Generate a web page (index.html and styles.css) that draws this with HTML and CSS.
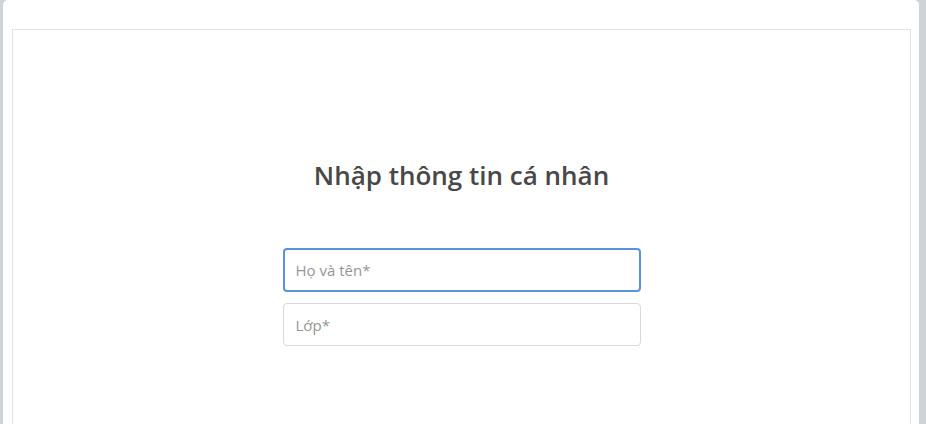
FILE: index.html
```html
<!DOCTYPE html>
<html lang="vi">
<head>
  <meta charset="UTF-8" />
  <meta name="viewport" content="width=device-width, initial-scale=1.0"/>
  <title>Nhập thông tin cá nhân</title>
<link rel="stylesheet" href="styles.css">
</head>
<body>

<div class="card">
  <div class="panel">
    <h1 class="title">Nhập thông tin cá nhân</h1>
    <form class="info-form">
      <input type="text" class="field focused" placeholder="Họ và tên*" />
      <input type="text" class="field" placeholder="Lớp*" />
    </form>
  </div>
</div>

</body>
</html>
```

FILE: styles.css
```css
:root {
  --gray-bg: #ced3d7;
  --border: #e2e2e2;
  --input-border: #d9d9d9;
  --focus: #5b92e0;
  --text: #484848;
  --placeholder: #959595;
}

* {
  box-sizing: border-box;
}

body {
  margin: 0;
  height: 424px;
  overflow: hidden;
  background: var(--gray-bg);
  font-family: 'Open Sans', sans-serif;
}

.card {
  margin-left: 3px;
  width: 916px;
  height: 424px;
  background: #fff;
  border-radius: 5px 5px 0 0;
  padding: 29px 8px 0 9px;
}

.panel {
  border: 1px solid var(--border);
  border-bottom: none;
  height: 100%;
  display: flex;
  flex-direction: column;
  align-items: center;
  padding-top: 126px;
}

.title {
  margin: 0;
  font-size: 26px;
  font-weight: 600;
  color: var(--text);
  line-height: 38px;
}

.info-form {
  margin-top: 54px;
  display: flex;
  flex-direction: column;
  gap: 11px;
}

.field {
  width: 358px;
  height: 43px;
  border: 1px solid var(--input-border);
  border-radius: 4px;
  padding: 0 12px;
  font-family: 'Open Sans', sans-serif;
  font-size: 15px;
  color: var(--text);
  outline: none;
  background: #fff;
}

.field::placeholder {
  color: var(--placeholder);
}

.field.focused {
  height: 44px;
  border: 2px solid var(--focus);
  padding: 0 11px;
}
```
